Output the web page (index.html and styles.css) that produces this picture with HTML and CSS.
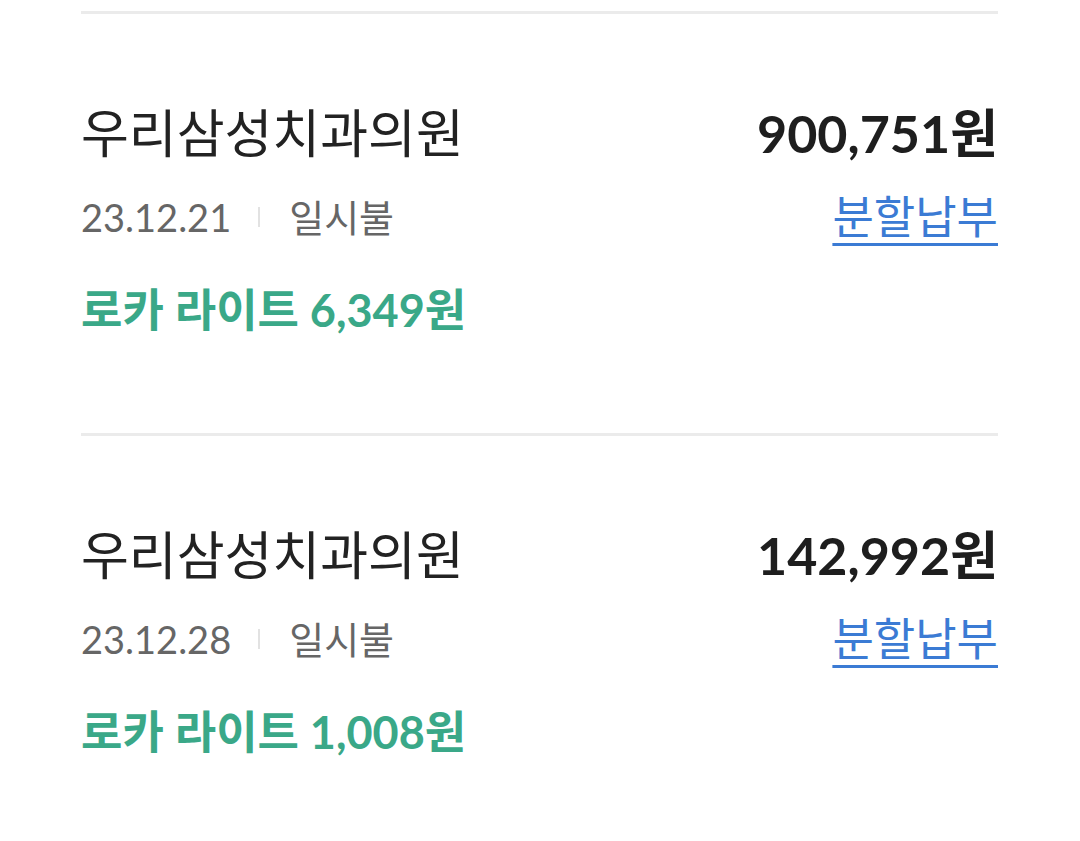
FILE: index.html
```html
<!DOCTYPE html>
<html lang="ko">
<head>
  <meta charset="UTF-8" />
  <title>결제 내역</title>
  <link rel="stylesheet" href="styles.css">
</head>
<body>

<div class="list">

  <!-- 결제 1 -->
  <div class="item">
    <div class="row">
      <div class="store">우리삼성치과의원</div>
      <div class="amount">900,751원</div>
    </div>
    <div class="row meta-row">
      <div class="meta">
        <span class="date">23.12.21</span>
        <span class="bar"></span>
        <span class="type">일시불</span>
      </div>
      <a class="split" href="#">분할납부</a>
    </div>
    <div class="point">로카 라이트 6,349원</div>
  </div>

  <!-- 결제 2 -->
  <div class="item">
    <div class="row">
      <div class="store">우리삼성치과의원</div>
      <div class="amount">142,992원</div>
    </div>
    <div class="row meta-row">
      <div class="meta">
        <span class="date">23.12.28</span>
        <span class="bar"></span>
        <span class="type">일시불</span>
      </div>
      <a class="split" href="#">분할납부</a>
    </div>
    <div class="point">로카 라이트 1,008원</div>
  </div>

</div>

</body>
</html>
```

FILE: styles.css
```css
html, body {
  margin: 0;
  padding: 0;
  background-color: white;
  font-family: "Lato", "Noto Sans CJK KR", sans-serif;
}
.list {
  padding: 0 82px 0 81px;
}
.item {
  border-top: 3px solid #ebebeb;
  padding: 89px 0 98px;
}
.item:first-child {
  margin-top: 11px;
}
.row {
  display: flex;
  justify-content: space-between;
  align-items: center;
}
.store {
  font-size: 52px;
  line-height: 60px;
  color: #222;
}
.amount {
  font-size: 52px;
  line-height: 60px;
  font-weight: bold;
  color: #1e1e1e;
}
.meta-row {
  margin-top: 32px;
}
.meta {
  display: flex;
  align-items: center;
  color: #666;
  line-height: 44px;
}
.date {
  font-size: 38px;
}
.bar {
  width: 2px;
  height: 20px;
  background-color: #e2e2e2;
  margin: 0 29px 0 27px;
}
.type {
  font-size: 38px;
}
.split {
  font-size: 45px;
  line-height: 44px;
  color: #3b7bd4;
  text-decoration: underline;
  text-decoration-thickness: 3px;
  text-underline-offset: 9px;
}
.point {
  margin-top: 46px;
  font-size: 45px;
  line-height: 50px;
  font-weight: bold;
  color: #3aa888;
}
```
